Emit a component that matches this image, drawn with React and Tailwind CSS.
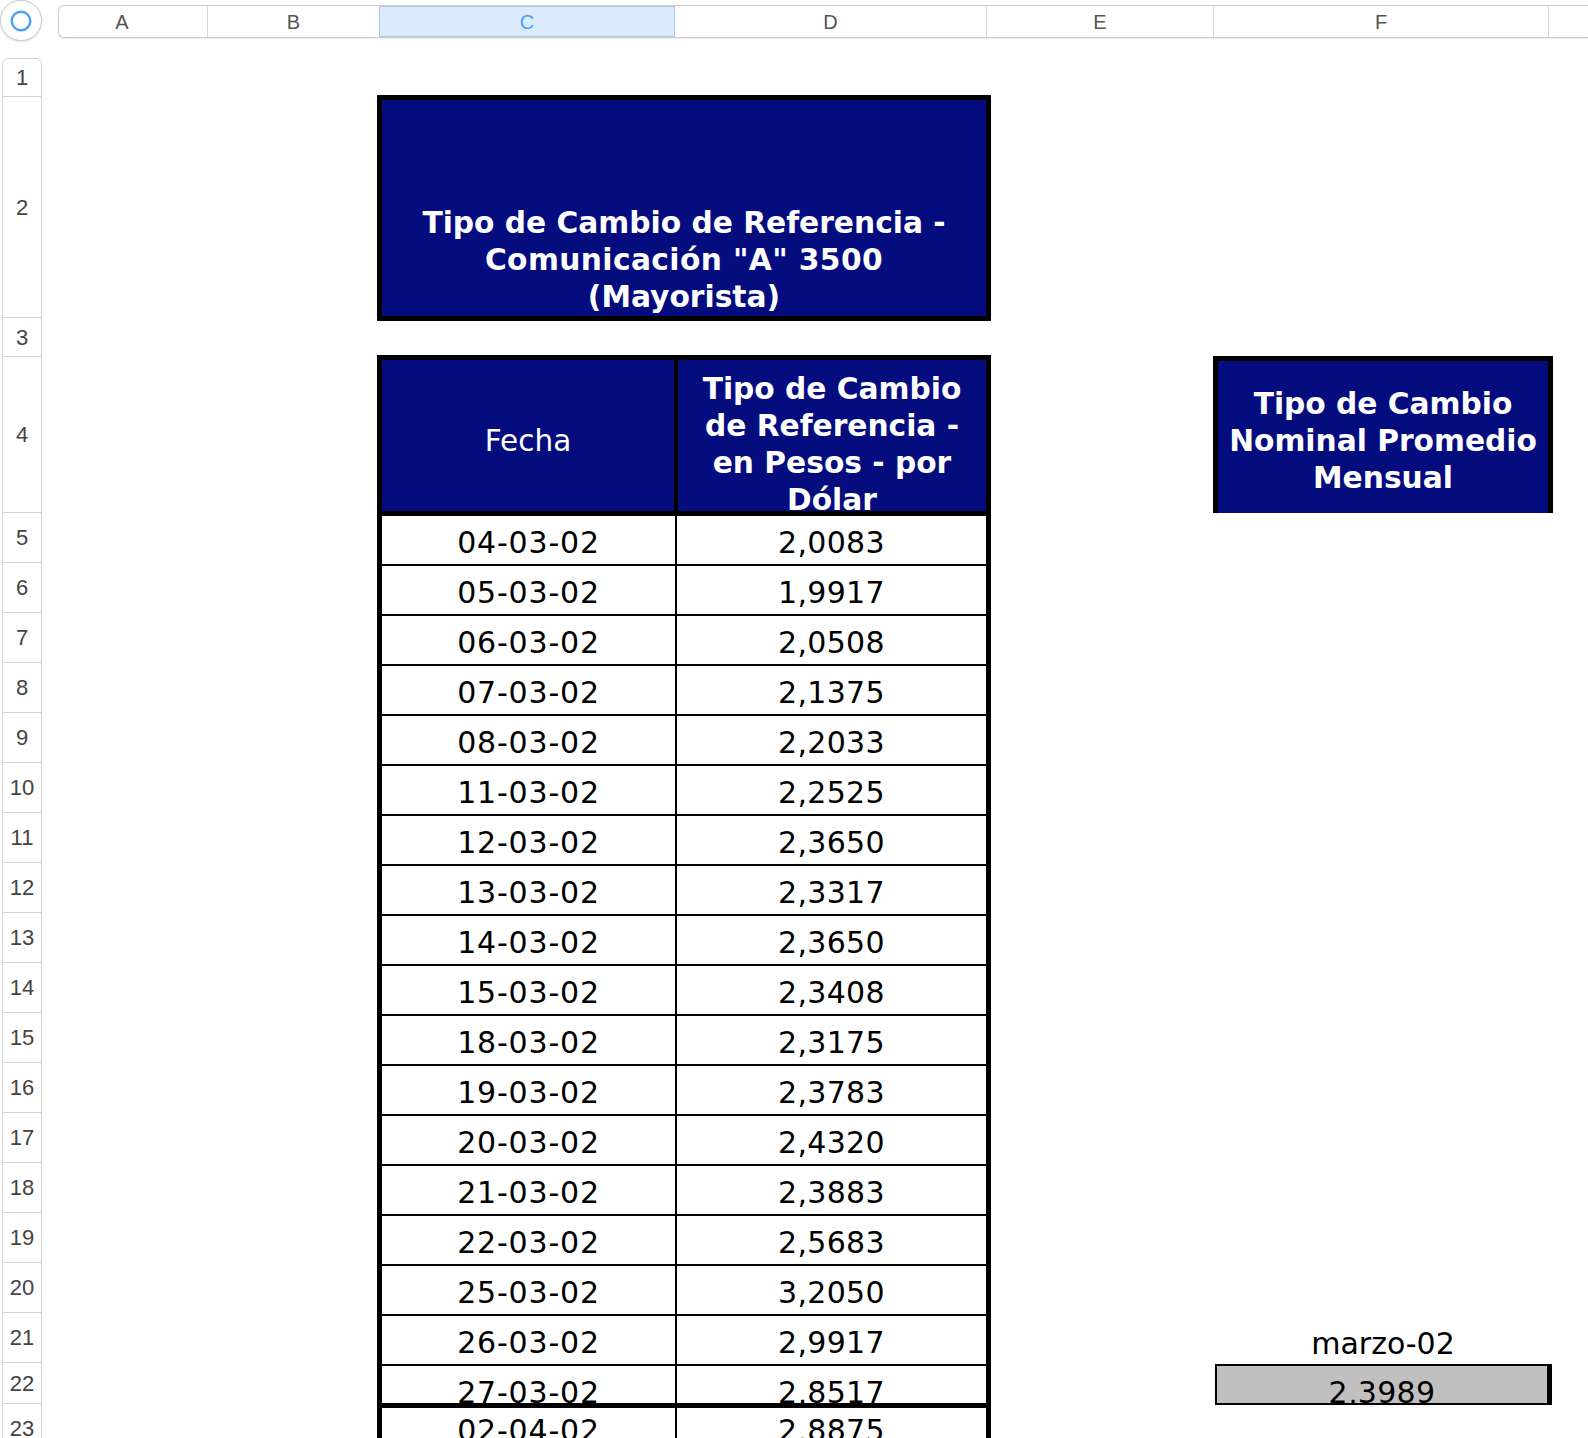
import React from 'react';

const cols = [
  { id: 'A', w: 'w-[149px]', extra: 'pr-[22px]' },
  { id: 'B', w: 'w-[172px]' },
  { id: 'C', w: 'w-[296px]', selected: true },
  { id: 'D', w: 'w-[312px]' },
  { id: 'E', w: 'w-[227px]' },
  { id: 'F', w: 'w-[335px]' },
];

const rowHeads = [
  { n: 1, h: 'h-[39px]' },
  { n: 2, h: 'h-[221px]' },
  { n: 3, h: 'h-[39px]' },
  { n: 4, h: 'h-[156px]' },
  ...Array.from({ length: 17 }, (_, i) => ({ n: i + 5, h: 'h-[50px]' })),
  { n: 22, h: 'h-[41px]' },
  { n: 23, h: 'h-[50px]' },
];

const data = [
  ['04-03-02', '2,0083'],
  ['05-03-02', '1,9917'],
  ['06-03-02', '2,0508'],
  ['07-03-02', '2,1375'],
  ['08-03-02', '2,2033'],
  ['11-03-02', '2,2525'],
  ['12-03-02', '2,3650'],
  ['13-03-02', '2,3317'],
  ['14-03-02', '2,3650'],
  ['15-03-02', '2,3408'],
  ['18-03-02', '2,3175'],
  ['19-03-02', '2,3783'],
  ['20-03-02', '2,4320'],
  ['21-03-02', '2,3883'],
  ['22-03-02', '2,5683'],
  ['25-03-02', '3,2050'],
  ['26-03-02', '2,9917'],
];

const cellFont = { fontFamily: '"DejaVu Sans", Verdana, sans-serif' };

const App = () => {
  return (
    <div
      className="w-[1588px] h-[1438px] overflow-hidden bg-white flex flex-col"
      style={{ fontFamily: '"Liberation Sans", Arial, sans-serif' }}
    >
      {/* Column header strip */}
      <div className="flex h-[58px] shrink-0">
        <div className="w-[42px] h-[41px] rounded-full border border-[#c8c8c8] bg-white shadow-[0_1px_2px_rgba(0,0,0,0.12)] flex items-center justify-center shrink-0">
          <svg width="24" height="24" viewBox="0 0 24 24">
            <circle cx="12" cy="12" r="9.3" fill="none" stroke="#4aa2f6" strokeWidth="2.4" />
          </svg>
        </div>
        <div className="ml-[16px] mt-[5px] h-[33px] flex-1 flex border-y border-l border-[#cdcdcd] rounded-l-[6px] bg-white shadow-[0_1px_1px_rgba(0,0,0,0.08)] overflow-hidden">
          {cols.map((c) => (
            <div
              key={c.id}
              className={`${c.w} shrink-0 h-full flex items-center justify-center text-[20px] border-r ${
                c.selected
                  ? 'bg-[#dcebfc] text-[#4a9ef6] border-[#aac6e6] border-l shadow-[inset_0_1px_0_#aac6e6,inset_0_-1px_0_#aac6e6] -ml-px'
                  : 'text-[#555] border-[#d6d6d6]'
              } ${c.extra || ''}`}
            >
              {c.id}
            </div>
          ))}
          <div className="flex-1" />
        </div>
      </div>

      {/* Body */}
      <div className="flex flex-1">
        {/* Row headers */}
        <div className="ml-[2px] w-[40px] shrink-0 flex flex-col">
          {rowHeads.map((r, i) => (
            <div
              key={r.n}
              className={`${r.h} shrink-0 flex items-center justify-center text-[22px] text-[#444] border-x border-b border-[#d3d3d3] ${
                i === 0 ? 'border-t rounded-t-[6px]' : ''
              }`}
            >
              {r.n}
            </div>
          ))}
        </div>

        {/* Sheet */}
        <div className="flex items-start" style={cellFont}>
          {/* Columns C-D */}
          <div className="ml-[335px] w-[614px] shrink-0 flex flex-col">
            <div className="mt-[37px] h-[226px] border-[5px] border-black bg-[#040c7e] flex flex-col justify-end items-center text-center text-white font-bold text-[29.7px] leading-[37px] pb-[1px]">
              <div>
                Tipo de Cambio de Referencia -<br />
                <span className="tracking-[0.4px]">Comunicación "A" 3500</span><br />
                (Mayorista)
              </div>
            </div>

            <div className="mt-[34px] border-x-[5px] border-t-[5px] border-black">
              <div className="flex h-[156px] bg-[#040c7e] border-b-[5px] border-black text-white">
                <div className="w-[296px] shrink-0 border-r-[4px] border-black flex items-center justify-center pt-[11px] text-[29.5px]">
                  Fecha
                </div>
                <div className="flex-1 overflow-hidden pt-[10px] text-center font-bold text-[29.7px] leading-[37px]">
                  Tipo de Cambio<br />
                  de Referencia -<br />
                  en Pesos - por<br />
                  Dólar
                </div>
              </div>

              {data.map(([d, v]) => (
                <div key={d} className="flex h-[50px] border-b-2 border-black text-[30px] leading-[53px] text-black">
                  <div className="w-[295px] shrink-0 border-r-2 border-black text-center overflow-hidden tracking-[0.8px]">{d}</div>
                  <div className="flex-1 text-center overflow-hidden tracking-[0.3px]">{v}</div>
                </div>
              ))}

              <div className="flex h-[42px] border-b-[5px] border-black text-[30px] leading-[53px] text-black overflow-hidden">
                <div className="w-[295px] shrink-0 border-r-2 border-black text-center overflow-hidden tracking-[0.8px]">27-03-02</div>
                <div className="flex-1 text-center overflow-hidden tracking-[0.3px]">2,8517</div>
              </div>

              <div className="flex h-[40px] text-[30px] leading-[46px] text-black overflow-hidden">
                <div className="w-[295px] shrink-0 border-r-2 border-black text-center overflow-hidden tracking-[0.8px]">02-04-02</div>
                <div className="flex-1 text-center overflow-hidden tracking-[0.3px]">2,8875</div>
              </div>
            </div>
          </div>

          {/* Column F */}
          <div className="ml-[222px] w-[340px] shrink-0 flex flex-col">
            <div className="mt-[298px] h-[157px] border-x-[5px] border-t-[5px] border-black bg-[#040c7e] flex flex-col justify-center items-center text-center pt-[7px] text-white font-bold text-[29.7px] leading-[37px]">
              <div>
                Tipo de Cambio<br />
                Nominal Promedio<br />
                Mensual
              </div>
            </div>

            <div className="mt-[803px] h-[48px] text-center text-[30px] leading-[55px] text-black overflow-hidden">
              marzo-02
            </div>

            <div className="ml-[2px] w-[337px] h-[41px] border-2 border-r-[5px] border-black bg-[#c0c0c0] text-center text-[30px] leading-[53px] text-black overflow-hidden tracking-[0.3px]">
              2,3989
            </div>
          </div>
        </div>
      </div>
    </div>
  );
};

export default App;
